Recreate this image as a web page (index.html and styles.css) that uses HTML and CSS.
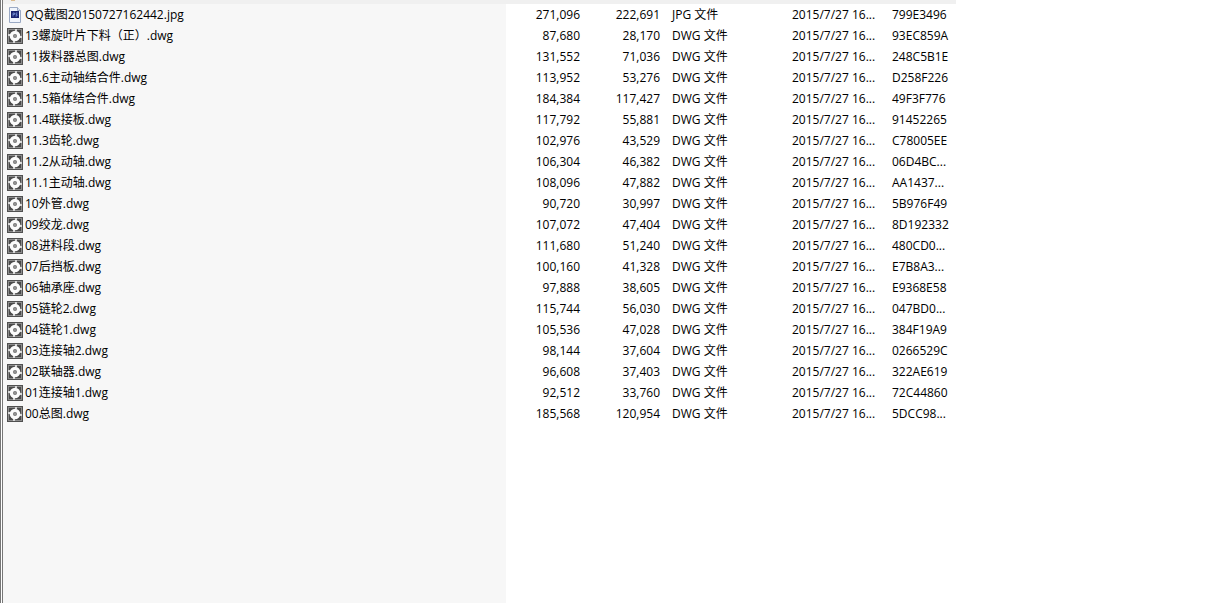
FILE: index.html
```html
<!DOCTYPE html>
<html lang="zh-CN">
<head>
  <meta charset="UTF-8">
  <meta name="viewport" content="width=device-width, initial-scale=1.0">
  <title>文件列表</title>
  <link rel="stylesheet" href="styles.css">
</head>
<body>

  <!-- 图标定义 -->
  <svg class="defs" aria-hidden="true">
    <symbol id="icon-dwg" viewBox="0 0 16 16">
      <rect width="16" height="16" fill="#505050"/>
      <rect x="1.500" y="1.500" width="13" height="13" fill="#4a4a4a" stroke="#8c8c8c"/>
      <path d="M8 1h2v2H8zM6 13h2v2H6zM1 6h2v2H1zM13 8h2v2h-2z" fill="#d8d8d8"/>
      <circle cx="8" cy="8" r="5.300" fill="#fbfbfb"/>
      <circle cx="8" cy="8" r="2" fill="#777"/>
      <circle cx="8" cy="8" r="0.800" fill="#b5b5b5"/>
    </symbol>
    <symbol id="icon-jpg" viewBox="0 0 16 16">
      <path d="M2.500 0.500h8l3 3v12h-11z" fill="#f1f5fc" stroke="#9aa9c4"/>
      <path d="M10.500 0.500v3h3" fill="#dfe6f1" stroke="#9aa9c4"/>
      <rect x="4" y="4" width="8" height="7" fill="#1b2470"/>
      <path d="M6 9.500V6h1.500v1.500H6M10.500 6H9v1.500h1V9H8.500" fill="none" stroke="#7f9ce0" stroke-width="0.800"/>
    </symbol>
  </svg>

  <main class="file-list">
    <div class="header-edge"><span class="folder-edge"></span></div>
    <table class="files">
      <colgroup>
        <col class="col-name">
        <col class="col-size">
        <col class="col-size">
        <col class="col-type">
        <col class="col-date">
        <col class="col-crc">
      </colgroup>
      <tbody>
        <tr><td class="name"><svg class="icon"><use href="#icon-jpg"/></svg>QQ截图20150727162442.jpg</td><td class="num">271,096</td><td class="num">222,691</td><td>JPG 文件</td><td>2015/7/27 16...</td><td>799E3496</td></tr>
        <tr><td class="name"><svg class="icon"><use href="#icon-dwg"/></svg>13螺旋叶片下料（正）.dwg</td><td class="num">87,680</td><td class="num">28,170</td><td>DWG 文件</td><td>2015/7/27 16...</td><td>93EC859A</td></tr>
        <tr><td class="name"><svg class="icon"><use href="#icon-dwg"/></svg>11拨料器总图.dwg</td><td class="num">131,552</td><td class="num">71,036</td><td>DWG 文件</td><td>2015/7/27 16...</td><td>248C5B1E</td></tr>
        <tr><td class="name"><svg class="icon"><use href="#icon-dwg"/></svg>11.6主动轴结合件.dwg</td><td class="num">113,952</td><td class="num">53,276</td><td>DWG 文件</td><td>2015/7/27 16...</td><td>D258F226</td></tr>
        <tr><td class="name"><svg class="icon"><use href="#icon-dwg"/></svg>11.5箱体结合件.dwg</td><td class="num">184,384</td><td class="num">117,427</td><td>DWG 文件</td><td>2015/7/27 16...</td><td>49F3F776</td></tr>
        <tr><td class="name"><svg class="icon"><use href="#icon-dwg"/></svg>11.4联接板.dwg</td><td class="num">117,792</td><td class="num">55,881</td><td>DWG 文件</td><td>2015/7/27 16...</td><td>91452265</td></tr>
        <tr><td class="name"><svg class="icon"><use href="#icon-dwg"/></svg>11.3齿轮.dwg</td><td class="num">102,976</td><td class="num">43,529</td><td>DWG 文件</td><td>2015/7/27 16...</td><td>C78005EE</td></tr>
        <tr><td class="name"><svg class="icon"><use href="#icon-dwg"/></svg>11.2从动轴.dwg</td><td class="num">106,304</td><td class="num">46,382</td><td>DWG 文件</td><td>2015/7/27 16...</td><td>06D4BC...</td></tr>
        <tr><td class="name"><svg class="icon"><use href="#icon-dwg"/></svg>11.1主动轴.dwg</td><td class="num">108,096</td><td class="num">47,882</td><td>DWG 文件</td><td>2015/7/27 16...</td><td>AA1437...</td></tr>
        <tr><td class="name"><svg class="icon"><use href="#icon-dwg"/></svg>10外管.dwg</td><td class="num">90,720</td><td class="num">30,997</td><td>DWG 文件</td><td>2015/7/27 16...</td><td>5B976F49</td></tr>
        <tr><td class="name"><svg class="icon"><use href="#icon-dwg"/></svg>09绞龙.dwg</td><td class="num">107,072</td><td class="num">47,404</td><td>DWG 文件</td><td>2015/7/27 16...</td><td>8D192332</td></tr>
        <tr><td class="name"><svg class="icon"><use href="#icon-dwg"/></svg>08进料段.dwg</td><td class="num">111,680</td><td class="num">51,240</td><td>DWG 文件</td><td>2015/7/27 16...</td><td>480CD0...</td></tr>
        <tr><td class="name"><svg class="icon"><use href="#icon-dwg"/></svg>07后挡板.dwg</td><td class="num">100,160</td><td class="num">41,328</td><td>DWG 文件</td><td>2015/7/27 16...</td><td>E7B8A3...</td></tr>
        <tr><td class="name"><svg class="icon"><use href="#icon-dwg"/></svg>06轴承座.dwg</td><td class="num">97,888</td><td class="num">38,605</td><td>DWG 文件</td><td>2015/7/27 16...</td><td>E9368E58</td></tr>
        <tr><td class="name"><svg class="icon"><use href="#icon-dwg"/></svg>05链轮2.dwg</td><td class="num">115,744</td><td class="num">56,030</td><td>DWG 文件</td><td>2015/7/27 16...</td><td>047BD0...</td></tr>
        <tr><td class="name"><svg class="icon"><use href="#icon-dwg"/></svg>04链轮1.dwg</td><td class="num">105,536</td><td class="num">47,028</td><td>DWG 文件</td><td>2015/7/27 16...</td><td>384F19A9</td></tr>
        <tr><td class="name"><svg class="icon"><use href="#icon-dwg"/></svg>03连接轴2.dwg</td><td class="num">98,144</td><td class="num">37,604</td><td>DWG 文件</td><td>2015/7/27 16...</td><td>0266529C</td></tr>
        <tr><td class="name"><svg class="icon"><use href="#icon-dwg"/></svg>02联轴器.dwg</td><td class="num">96,608</td><td class="num">37,403</td><td>DWG 文件</td><td>2015/7/27 16...</td><td>322AE619</td></tr>
        <tr><td class="name"><svg class="icon"><use href="#icon-dwg"/></svg>01连接轴1.dwg</td><td class="num">92,512</td><td class="num">33,760</td><td>DWG 文件</td><td>2015/7/27 16...</td><td>72C44860</td></tr>
        <tr><td class="name"><svg class="icon"><use href="#icon-dwg"/></svg>00总图.dwg</td><td class="num">185,568</td><td class="num">120,954</td><td>DWG 文件</td><td>2015/7/27 16...</td><td>5DCC98...</td></tr>
      </tbody>
    </table>
  </main>

</body>
</html>
```
FILE: styles.css
```css
* {
  box-sizing: border-box;
}

body {
  margin: 0;
  background: #fff;
  color: #000;
  font-family: "Open Sans", "Noto Sans CJK SC", sans-serif;
  font-size: 12px;
  line-height: 20px;
}

.defs {
  display: none;
}

/* 排序列（名称）的浅灰底色一直延伸到窗口底部 */
.file-list {
  min-height: 100vh;
  border-left: 3px double #777;
  background: linear-gradient(#f7f7f7, #f7f7f7) no-repeat 0 0 / 503px 100%;
}

/* 表头的下边缘 */
.header-edge {
  display: flex;
  width: 953px;
  max-width: 100%;
  height: 4px;
  padding-left: 8px;
  background: #f0f0f0;
}

.folder-edge {
  width: 4px;
  height: 1px;
  background: #d9b98c;
}

.files {
  width: 953px;
  table-layout: fixed;
  border-collapse: collapse;
}

.col-name { width: 503px; }
.col-size { width: 80px; }
.col-type { width: 120px; }
.col-date { width: 100px; }
.col-crc { width: 70px; }

.files td {
  height: 21px;
  padding: 0 6px;
  white-space: nowrap;
}

.files .name {
  padding-left: 4px;
}

.files .num {
  text-align: right;
}

.icon {
  width: 16px;
  height: 16px;
  margin: 2px 2px 0 0;
  vertical-align: top;
}
```
